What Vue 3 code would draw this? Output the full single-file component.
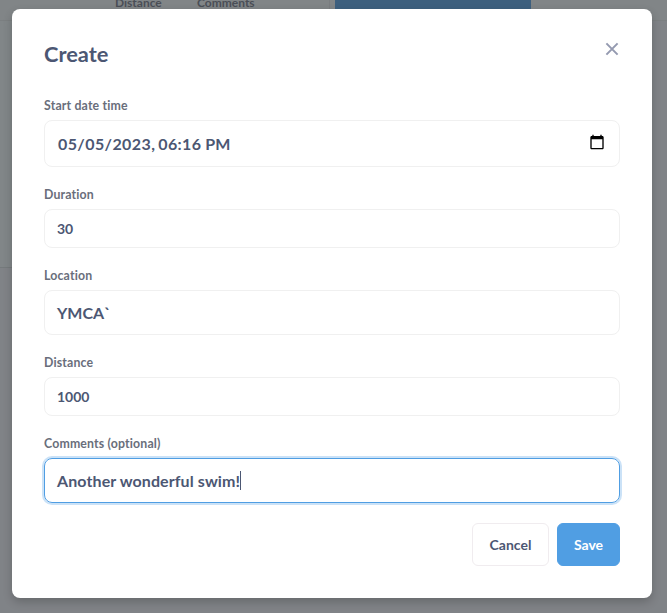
<script setup>
const fields = [
  { key: 'start', label: 'Start date time', value: ['05/05/2023', ', ', '06:16', ' PM'] },
  { key: 'duration', label: 'Duration', value: ['30'] },
  { key: 'location', label: 'Location', value: ['YMCA`'] },
  { key: 'distance', label: 'Distance', value: ['1000'] },
  { key: 'comments', label: 'Comments (optional)', value: ['Another wonderful swim!'] },
]
</script>

<template>
  <div class="screen">
    <div class="page">
      <div class="table-head">
        <span class="th th-distance">Distance</span>
        <span class="th th-comments">Comments</span>
        <span class="divider"></span>
        <span class="blue-button"></span>
      </div>
      <div class="page-body"></div>
    </div>
    <section class="modal" role="dialog" aria-label="Create">
      <header class="header">
        <h2 class="title">Create</h2>
        <svg class="close" width="14" height="14" viewBox="0 0 14 14">
          <path d="M1.4 1.4L12.6 12.6M12.6 1.4L1.4 12.6" />
        </svg>
      </header>
      <div v-for="f in fields" :key="f.key" class="field">
        <label class="label">{{ f.label }}</label>
        <div class="input" :class="f.key">
          <span class="value"><span v-for="(part, i) in f.value" :key="i" :class="'part-' + i">{{ part }}</span></span>
          <span v-if="f.key === 'comments'" class="caret"></span>
          <svg v-if="f.key === 'start'" class="calendar" width="16" height="16" viewBox="0 0 24 24">
            <path d="M20 3h-1V1h-2v2H7V1H5v2H4c-1.1 0-2 .9-2 2v16c0 1.1.9 2 2 2h16c1.1 0 2-.9 2-2V5c0-1.1-.9-2-2-2zm0 18H4V8h16v13z" />
          </svg>
        </div>
      </div>
      <footer class="footer">
        <button class="btn cancel">Cancel</button>
        <button class="btn save">Save</button>
      </footer>
    </section>
  </div>
</template>

<style>
body {
  margin: 0;
  overflow: hidden;
}
</style>

<style scoped>
.screen {
  position: relative;
  box-sizing: border-box;
  width: 667px;
  height: 613px;
  padding: 9px 0 0 12px;
  overflow: hidden;
  background: #808387;
  font-family: Lato, sans-serif;
  font-weight: 700;
  color: #4c5773;
}
.page {
  position: absolute;
  inset: 0;
}
.table-head {
  display: flex;
  height: 20px;
  border-bottom: 1px solid #7b7f81;
  background: #818587;
}
.th {
  margin-top: -5px;
  font-size: 12px;
  line-height: 16px;
  color: #4a4e56;
}
.th-distance {
  width: 82px;
  margin-left: 115px;
}
.th-comments {
  width: 132px;
}
.divider {
  width: 1px;
  background: #7a7d80;
}
.blue-button {
  width: 196px;
  margin-left: 5px;
  background: #3d5f7e;
}
.page-body {
  width: 12px;
  height: 246px;
  border-bottom: 1px solid #757a7c;
  background: #818688;
}
.modal {
  position: relative;
  box-sizing: border-box;
  width: 640px;
  height: 589px;
  padding: 32px;
  border-radius: 8px;
  background: #fff;
  box-shadow: 0 4px 10px rgba(0, 0, 0, 0.2);
}
.header {
  display: flex;
  justify-content: space-between;
  height: 55px;
}
.title {
  margin: 0;
  font-size: 21.8px;
  line-height: 25px;
}
.close {
  margin: 1px 1px 0 0;
  fill: none;
  stroke: #949ab0;
  stroke-width: 2;
}
.field {
  margin-bottom: 19px;
}
.label {
  display: block;
  height: 24px;
  font-size: 12.32px;
  line-height: 18px;
  letter-spacing: 0.16px;
  font-variant-ligatures: none;
  color: #696e7b;
}
.field:nth-child(2) .label {
  line-height: 20px;
}
.field:not(:nth-child(2)) .label {
  height: 23px;
}
.input {
  display: flex;
  align-items: center;
  box-sizing: border-box;
  height: 45px;
  padding: 0 12px;
  border: 1px solid #f0f0f0;
  border-radius: 8px;
  font-size: 16px;
  line-height: 20px;
}
.value {
  white-space: pre;
}
.start {
  height: 47px;
  padding-left: 13px;
}
.start .value {
  margin-top: 1px;
}
.start .part-0,
.start .part-2 {
  letter-spacing: 0.4px;
}
.start .part-1 {
  letter-spacing: -0.3px;
}
.calendar {
  margin: 0 2px 3px auto;
  fill: #000;
}
.duration,
.distance {
  height: 39px;
  font-size: 14px;
}
.comments {
  border-color: #509ee3;
  box-shadow: 0 0 0 2px #cbe2f7;
  letter-spacing: 0.1px;
}
.caret {
  width: 1px;
  height: 19px;
  background: #4c5773;
}
.footer {
  display: flex;
  justify-content: flex-end;
  gap: 8px;
  padding-top: 1px;
}
.btn {
  box-sizing: border-box;
  height: 43px;
  padding: 0;
  border: 1px solid #f0ecef;
  border-radius: 6px;
  background: #fff;
  color: #4c5773;
  font: 700 14px/18px Lato, sans-serif;
}
.cancel {
  width: 77px;
}
.save {
  width: 63px;
  border-color: #509ee3;
  background: #509ee3;
  color: #fff;
}
</style>
